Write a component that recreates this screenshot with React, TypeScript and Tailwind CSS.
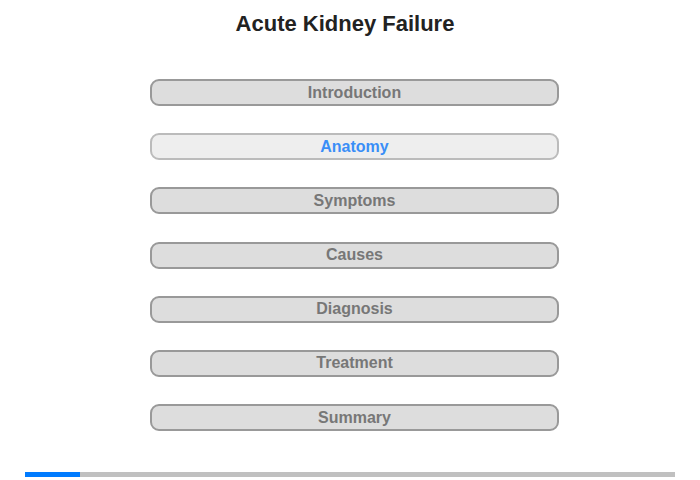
import React from "react";

const items = ["Introduction", "Anatomy", "Symptoms", "Causes", "Diagnosis", "Treatment", "Summary"];

export default function App() {
  return (
    <div className="w-[700px] h-[480px] bg-white flex flex-col" style={{ fontFamily: '"Liberation Sans", Arial, sans-serif' }}>
      <div className="mt-[10px] h-[28px] leading-[28px] text-[22px] font-bold text-[#222] text-center ml-[-10px]">
        Acute Kidney Failure
      </div>
      <div className="mt-[41px] ml-[150px] w-[409px] flex flex-col gap-[27.2px]">
        {items.map((t, i) =>
          i === 1 ? (
            <div key={t} className="h-[27px] rounded-[9px] border-2 border-[#bbbbbb] bg-[#eeeeee] flex items-center justify-center text-[16px] font-bold text-[#3a8ef7]">
              {t}
            </div>
          ) : (
            <div key={t} className="h-[27px] rounded-[9px] border-2 border-[#999999] bg-[#dddddd] flex items-center justify-center text-[16px] font-bold text-[#777777]">
              {t}
            </div>
          )
        )}
      </div>
      <div className="mt-[41px] ml-[25px] w-[650px] h-[5px] bg-[#c0c0c0] flex">
        <div className="w-[55px] h-full bg-[#007bff]" />
      </div>
    </div>
  );
}
